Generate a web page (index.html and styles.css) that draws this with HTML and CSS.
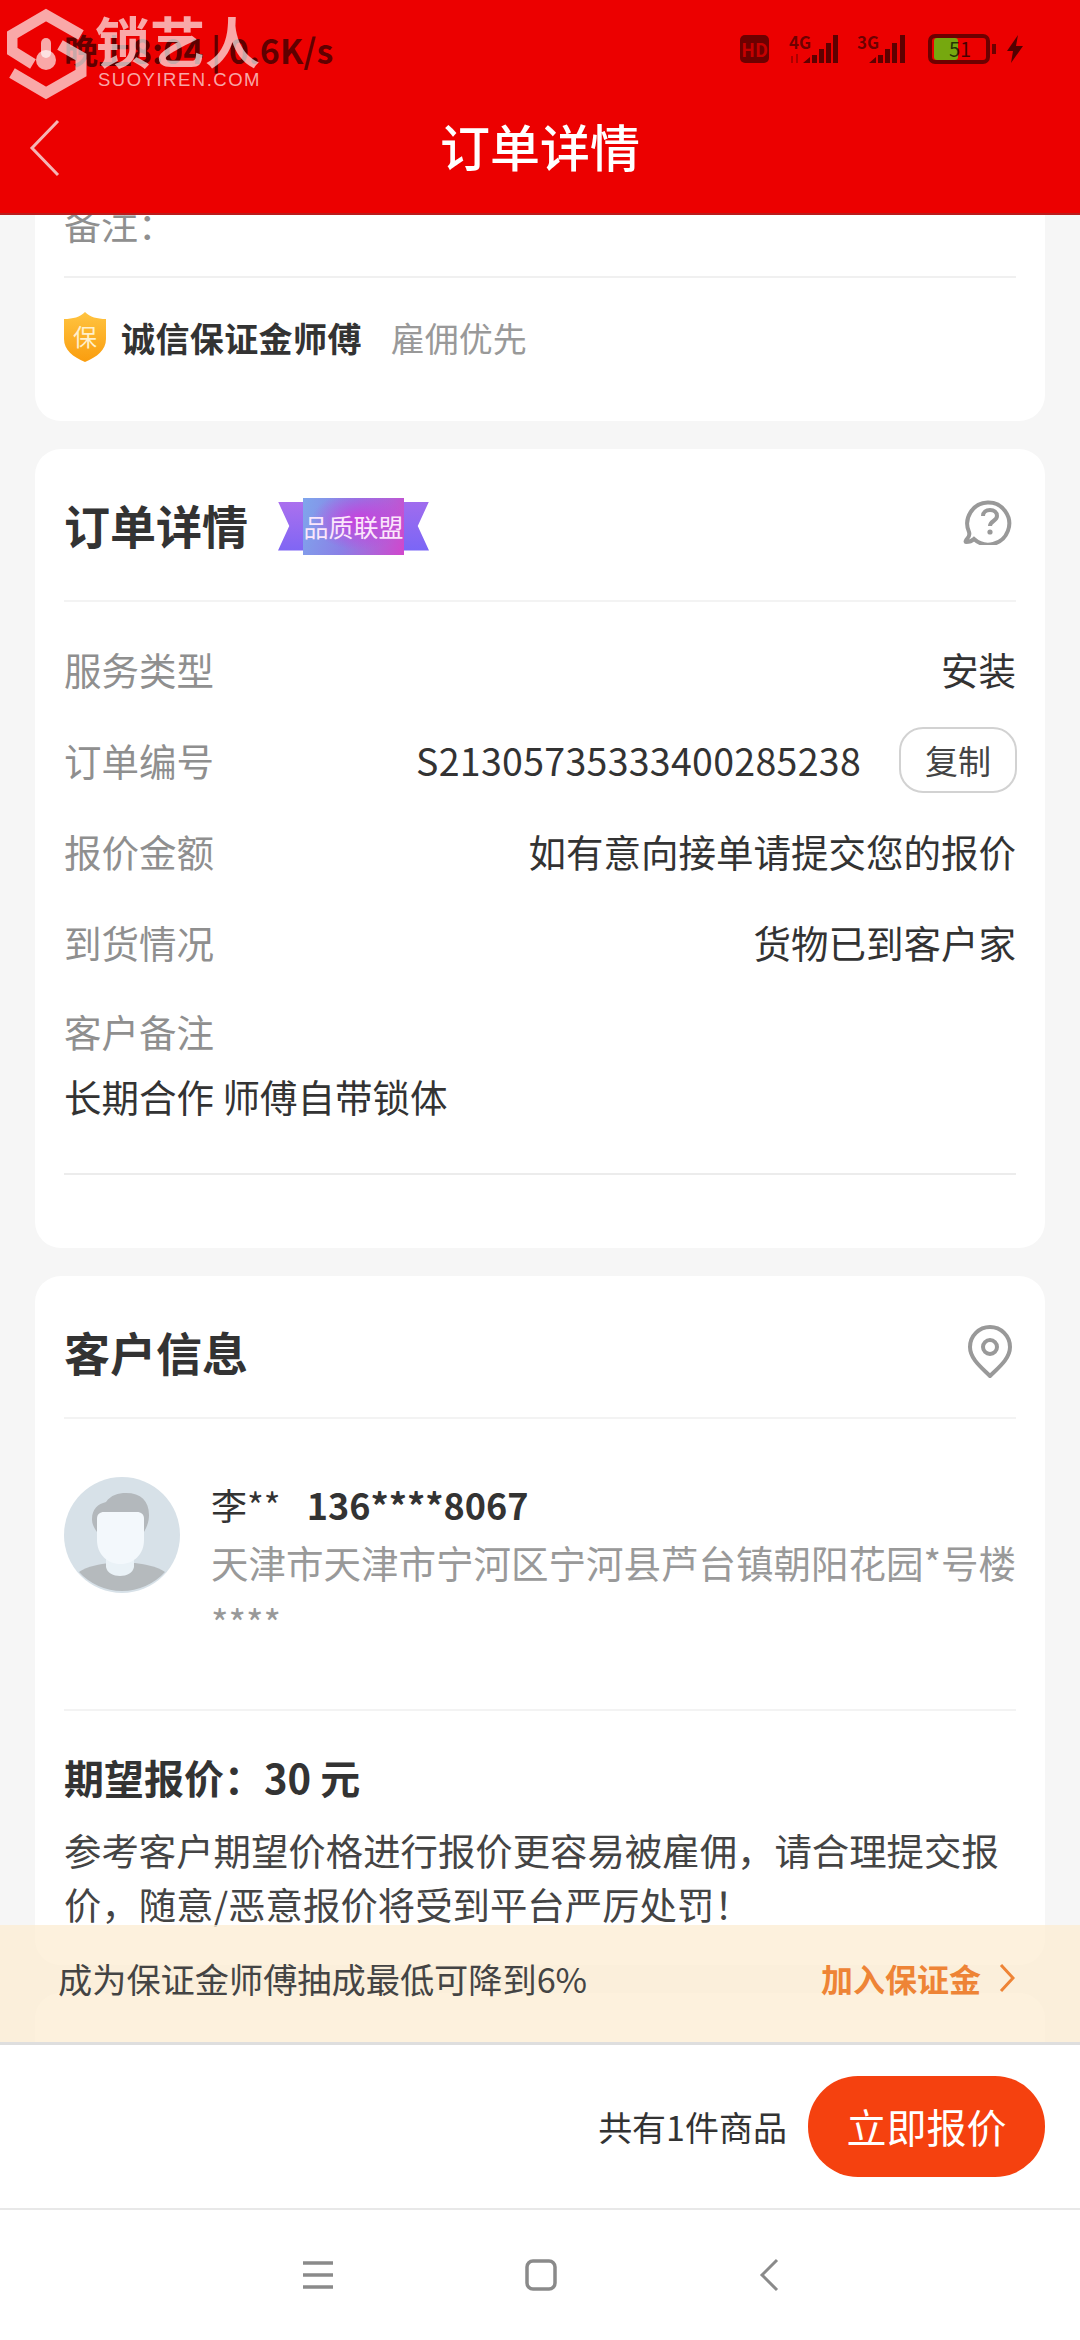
FILE: index.html
```html
<!DOCTYPE html>
<html lang="zh-CN">
<head>
    <meta charset="UTF-8">
    <meta name="viewport" content="width=device-width, initial-scale=1.0">
    <title>订单详情</title>
    <link rel="stylesheet" href="styles.css">
</head>

<body>
    <div class="app">
        <header class="top">
            <div class="status">
                <span class="status-time">晚上8:04 | 0.6K/s</span>
                <div class="status-icons">
                    <span class="hd">HD</span>
                    <div class="signal">
                        <span class="net">4G</span>
                        <svg width="54" height="28" viewBox="0 0 54 28">
                            <path d="M2 21h2v7H2zM7 19h2v9H7z" opacity=".45"/>
                            <path d="M14 28l7-6v6zM23 20h5v8h-5zM30 14h5v14h-5zM37 8h5v20h-5zM44 0h5v28h-5z"/>
                        </svg>
                    </div>
                    <div class="signal">
                        <span class="net">3G</span>
                        <svg width="54" height="28" viewBox="0 0 54 28">
                            <path d="M12 28l7-6v6zM21 20h5v8h-5zM28 14h5v14h-5zM35 8h5v20h-5zM43 0h5v28h-5z"/>
                        </svg>
                    </div>
                    <div class="battery">
                        <div class="battery-fill"></div>
                        <span class="battery-num">51</span>
                    </div>
                    <span class="battery-nub"></span>
                    <svg class="bolt" width="18" height="28" viewBox="0 0 18 28">
                        <path d="M12 0L1 16h6l-2 12 12-17h-7z"/>
                    </svg>
                </div>
            </div>
            <div class="navbar">
                <svg class="nav-back" width="32" height="58" viewBox="0 0 32 58">
                    <path d="M29 2L3 29l26 27"/>
                </svg>
                <h1>订单详情</h1>
            </div>
        </header>

        <!-- site watermark baked into the screenshot -->
        <div class="watermark">
            <svg width="80" height="92" viewBox="0 0 80 92">
                <path class="wm-line" d="M74 27L39 7 5 27v16l21 13"/>
                <path class="wm-line" d="M5 65l34 20 35-20V49L53 37"/>
                <circle class="wm-dot" cx="39" cy="52" r="10"/>
                <rect class="wm-dot" x="34" y="30" width="10" height="20" rx="5"/>
            </svg>
            <div class="wm-text">
                <span class="wm-name">锁艺人</span>
                <span class="wm-url">SUOYIREN.COM</span>
            </div>
        </div>

        <main class="scroll">
            <div class="scroll-body">
                <section class="card">
                    <p class="remark">备注&#xFF1A;</p>
                    <div class="deposit">
                        <div class="shield">
                            <svg width="42" height="50" viewBox="0 0 42 50">
                                <defs>
                                    <linearGradient id="shieldFill" x1="0" y1="0" x2="0" y2="1">
                                        <stop offset="0" stop-color="#ffc441"/>
                                        <stop offset="1" stop-color="#fa9d0e"/>
                                    </linearGradient>
                                </defs>
                                <path d="M21 0c5 5 12 7 21 7v20c0 11-9 18-21 23C9 45 0 38 0 27V7c9 0 16-2 21-7z" fill="url(#shieldFill)"/>
                            </svg>
                            <span class="shield-text">保</span>
                        </div>
                        <strong>诚信保证金师傅</strong>
                        <span class="deposit-sub">雇佣优先</span>
                    </div>
                </section>

                <section class="card">
                    <div class="card-head card-head-tall">
                        <h2>订单详情</h2>
                        <div class="ribbon">
                            <span class="ribbon-end ribbon-left"></span>
                            <span class="ribbon-mid">品质联盟</span>
                            <span class="ribbon-end ribbon-right"></span>
                        </div>
                        <svg class="head-icon head-icon-help" width="50" height="46" viewBox="0 0 50 46">
                            <path class="icon-line" d="M3 43c3 0 6-1 8-3a21 21 0 1 0-5-7c1 3 0 5-2 7-1 1-2 3-1 3z"/>
                            <path class="icon-line" d="M20 17c0-4 3-6 7-6s7 2 7 6c0 5-7 5-7 10"/>
                            <circle cx="27" cy="33" r="2.6" fill="#999"/>
                        </svg>
                    </div>
                    <div class="details">
                        <div class="row">
                            <span class="label">服务类型</span>
                            <span class="value">安装</span>
                        </div>
                        <div class="row">
                            <span class="label">订单编号</span>
                            <span class="value order-no">S21305735333400285238</span>
                            <button class="copy">复制</button>
                        </div>
                        <div class="row">
                            <span class="label">报价金额</span>
                            <span class="value">如有意向接单请提交您的报价</span>
                        </div>
                        <div class="row">
                            <span class="label">到货情况</span>
                            <span class="value">货物已到客户家</span>
                        </div>
                        <div class="row row-note">
                            <span class="label">客户备注</span>
                        </div>
                        <p class="note">长期合作 师傅自带锁体</p>
                    </div>
                </section>

                <section class="card">
                    <div class="card-head">
                        <h2>客户信息</h2>
                        <svg class="head-icon" width="46" height="54" viewBox="0 0 46 54">
                            <path class="icon-line" d="M23 52C15 44 3 35 3 23a20 20 0 0 1 40 0c0 12-12 21-20 29z"/>
                            <circle class="icon-line" cx="23" cy="23" r="7"/>
                        </svg>
                    </div>
                    <div class="customer">
                        <svg class="avatar" width="116" height="116" viewBox="0 0 116 116">
                            <circle cx="58" cy="58" r="58" fill="#d7e1e8"/>
                            <path d="M15 95c8-6 22-8 30-9h26c8 1 22 3 30 9a58 58 0 0 1-86 0z" fill="#b5babd"/>
                            <path d="M42 80h28v10c-2 12-26 12-28 0z" fill="#eaf2f7"/>
                            <path d="M28 42c0-10 6-15 14-17 5-7 12-9 20-9 15 0 23 8 23 22 0 5-1 10-5 17H33c-3-4-5-8-5-13z" fill="#b3b8bc"/>
                            <path d="M33 42c0-5 3-7 7-7h33c4 0 7 2 7 7v21c0 14-10 24-23.500 24S33 77 33 63z" fill="#f3f8fc"/>
                        </svg>
                        <div class="customer-info">
                            <p class="customer-name">李** <b>136****8067</b></p>
                            <p class="customer-addr">天津市天津市宁河区宁河县芦台镇朝阳花园*号楼****</p>
                        </div>
                    </div>
                    <div class="expect">
                        <h3>期望报价&#xFF1A;30 元</h3>
                        <p>参考客户期望价格进行报价更容易被雇佣&#xFF0C;请合理提交报价&#xFF0C;随意/恶意报价将受到平台严厉处罚&#xFF01;</p>
                    </div>
                </section>

                <section class="card card-next"></section>
            </div>

            <div class="notice">
                <span>成为保证金师傅抽成最低可降到6%</span>
                <a class="notice-link">加入保证金
                    <svg width="16" height="30" viewBox="0 0 16 30">
                        <path d="M2 2l12 13L2 28"/>
                    </svg>
                </a>
            </div>
        </main>

        <div class="action">
            <span class="action-count">共有1件商品</span>
            <button class="quote">立即报价</button>
        </div>

        <nav class="sysnav">
            <svg width="32" height="30" viewBox="0 0 32 30">
                <path d="M1 3h30M1 15h30M1 27h30"/>
            </svg>
            <svg width="32" height="32" viewBox="0 0 32 32">
                <rect x="2" y="2" width="28" height="28" rx="6"/>
            </svg>
            <svg class="sysnav-back" width="20" height="34" viewBox="0 0 20 34">
                <path d="M18 2L3 17l15 15"/>
            </svg>
        </nav>
    </div>
</body>

</html>
```

FILE: styles.css
```css
* {
    box-sizing: border-box;
}

body {
    margin: 0;
    font-family: "Noto Sans CJK SC", "Noto Sans", sans-serif;
    background-color: #f6f6f6;
    color: #333;
}

h1, h2, h3, p {
    margin: 0;
}

button {
    font-family: inherit;
    padding: 0;
}

.app {
    position: relative;
    display: flex;
    flex-direction: column;
    width: 1080px;
    height: 2340px;
    overflow: hidden;
}

/* red header */
.top {
    flex: none;
    height: 215px;
    background-color: #ec0000;
    border-bottom: 2px solid #b91d1d;
}

.status {
    display: flex;
    align-items: center;
    justify-content: space-between;
    height: 98px;
    padding: 0 56px 0 64px;
    color: rgba(0, 0, 0, 0.6);
}

.status-time {
    font-size: 34px;
    font-weight: 700;
}

.status-icons {
    display: flex;
    align-items: center;
}

.hd {
    width: 29px;
    height: 28px;
    margin-right: 20px;
    border-radius: 5px;
    background-color: #6d0000;
    color: #c60000;
    font-size: 18px;
    font-weight: 700;
    line-height: 28px;
    text-align: center;
}

.signal {
    position: relative;
    height: 28px;
    margin-right: 14px;
    fill: rgba(0, 0, 0, 0.6);
}

.signal svg {
    display: block;
}

.net {
    position: absolute;
    top: -3px;
    left: 0;
    color: rgba(0, 0, 0, 0.55);
    font-size: 17px;
    font-weight: 700;
    line-height: 20px;
}

.battery {
    position: relative;
    width: 62px;
    height: 30px;
    border: 4px solid #6d0000;
    border-radius: 7px;
    margin-left: 3px;
}

.battery-fill {
    width: 24px;
    height: 100%;
    margin-left: 2px;
    border-radius: 3px;
    background-color: #76a80f;
}

.battery-num {
    position: absolute;
    top: -3px;
    left: 17px;
    color: rgba(0, 0, 0, 0.7);
    font-size: 20px;
    line-height: 28px;
}

.battery-nub {
    width: 4px;
    height: 10px;
    margin: 0 10px 0 2px;
    background-color: #6d0000;
}

.bolt {
    fill: rgba(0, 0, 0, 0.65);
}

.navbar {
    position: relative;
    height: 115px;
    text-align: center;
}

.navbar h1 {
    color: #fff;
    font-size: 50px;
    font-weight: 500;
    line-height: 94px;
}

.nav-back {
    position: absolute;
    top: 21px;
    left: 29px;
    fill: none;
    stroke: #f5b5b5;
    stroke-width: 3;
}

.watermark {
    position: absolute;
    top: 8px;
    left: 7px;
    display: flex;
    color: rgba(255, 255, 255, 0.66);
}

.wm-line {
    fill: none;
    stroke: rgba(255, 255, 255, 0.66);
    stroke-width: 11;
}

.wm-dot {
    fill: rgba(255, 255, 255, 0.66);
}

.wm-text {
    display: flex;
    flex-direction: column;
    margin-left: 8px;
}

.wm-name {
    font-size: 55px;
    font-weight: 700;
    line-height: 62px;
}

.wm-url {
    margin-left: 3px;
    font-family: "Liberation Sans", sans-serif;
    font-size: 18.5px;
    letter-spacing: 1.5px;
    line-height: 20px;
}

/* scrolled content */
.scroll {
    position: relative;
    flex: 1;
    overflow: hidden;
}

.scroll-body {
    margin-top: -43px;
    padding: 0 35px;
}

.card {
    margin-bottom: 28px;
    padding: 0 29px;
    background-color: #fff;
    border-radius: 26px;
    overflow: hidden;
}

.remark {
    padding: 20px 0;
    border-bottom: 2px solid #f0f0f0;
    color: #8f8f8f;
    font-size: 37px;
    line-height: 64px;
}

.deposit {
    display: flex;
    align-items: center;
    height: 143px;
    padding-bottom: 25px;
}

.shield {
    position: relative;
    width: 42px;
    height: 50px;
    margin-right: 15px;
}

.shield svg {
    display: block;
}

.shield-text {
    position: absolute;
    top: 8px;
    left: 9px;
    color: #fff0cc;
    font-size: 24px;
    line-height: 32px;
}

.deposit strong {
    font-size: 34px;
    font-weight: 700;
    letter-spacing: 0.4px;
}

.deposit-sub {
    margin-left: 29px;
    color: #999;
    font-size: 34px;
}

.card-head {
    display: flex;
    align-items: center;
    padding: 44px 0 35px;
    border-bottom: 2px solid #f3f3f3;
}

.card-head-tall {
    padding-bottom: 45px;
}

.card-head h2 {
    font-size: 46px;
    font-weight: 700;
    line-height: 62px;
}

.head-icon {
    margin-left: auto;
    margin-right: 3px;
}

.head-icon-help {
    margin-top: -4px;
}

.icon-line {
    fill: none;
    stroke: #999;
    stroke-width: 4;
}

.ribbon {
    display: flex;
    align-items: center;
    margin-top: 4px;
    margin-left: 30px;
}

.ribbon-mid {
    position: relative;
    width: 101px;
    height: 57px;
    background:
        radial-gradient(ellipse at 55% 40%, #c93fdc 0%, rgba(201, 63, 220, 0) 60%),
        linear-gradient(105deg, #7fa6ec 0%, #8a80e6 45%, #d147cc 100%);
    color: #fbe6fb;
    font-size: 25px;
    line-height: 57px;
    text-align: center;
    white-space: nowrap;
}

.ribbon-end {
    width: 25px;
    height: 49px;
}

.ribbon-left {
    background: linear-gradient(#ab70ee, #7f66f4);
    clip-path: polygon(0 0, 100% 0, 100% 100%, 0 100%, 45% 50%);
}

.ribbon-right {
    background: linear-gradient(#a06cee, #7a66f6);
    clip-path: polygon(0 0, 100% 0, 55% 50%, 100% 100%, 0 100%);
}

.details {
    padding: 21px 0 73px;
}

.row {
    display: flex;
    align-items: center;
    height: 91px;
    font-size: 37.5px;
}

.row-note {
    height: 86px;
}

.label {
    color: #8f8f8f;
}

.value {
    margin-left: auto;
    color: #333;
}

.order-no {
    letter-spacing: 0.3px;
}

.copy {
    width: 118px;
    height: 66px;
    margin-left: 38px;
    margin-right: -1px;
    background-color: #fff;
    border: 2px solid #d2d2d2;
    border-radius: 24px;
    color: #444;
    font-size: 33px;
}

.note {
    padding-bottom: 54px;
    border-bottom: 2px solid #ececec;
    font-size: 37.5px;
    line-height: 46px;
}

.customer {
    display: flex;
    align-items: flex-start;
    gap: 31px;
    padding: 55px 0 57px;
    border-bottom: 2px solid #f3f3f3;
}

.avatar {
    flex: none;
    margin-top: 3px;
}

.customer-info {
    flex: 1;
}

.customer-name {
    font-size: 36px;
    line-height: 60px;
}

.customer-name b {
    margin-left: 18px;
    font-weight: 700;
}

.customer-addr {
    margin-top: -2px;
    color: #999;
    font-size: 37.5px;
    line-height: 60px;
}

.expect {
    padding: 36px 0 34px;
}

.expect h3 {
    font-size: 40px;
    font-weight: 700;
    line-height: 60px;
}

.expect p {
    margin-top: 16px;
    color: #444;
    font-size: 37.4px;
    line-height: 54px;
}

.card-next {
    height: 120px;
}

.notice {
    position: absolute;
    left: 0;
    right: 0;
    bottom: 0;
    display: flex;
    align-items: center;
    justify-content: space-between;
    height: 117px;
    padding: 0 65px 11px 58px;
    background-color: rgba(252, 238, 212, 0.8);
    color: #444;
    font-size: 34.2px;
}

.notice-link {
    display: flex;
    align-items: center;
    gap: 18px;
    color: #ee8436;
    font-size: 32px;
    font-weight: 700;
}

.notice-link svg {
    fill: none;
    stroke: #ee8436;
    stroke-width: 3;
}

/* bottom action bar */
.action {
    flex: none;
    display: flex;
    align-items: center;
    justify-content: flex-end;
    height: 168px;
    padding: 0 35px 1px 0;
    background-color: #fff;
    border-top: 3px solid #dedede;
    border-bottom: 2px solid #e8e8e8;
}

.action-count {
    margin-right: 21px;
    font-size: 34px;
}

.quote {
    width: 237px;
    height: 101px;
    background-color: #f5410f;
    border: none;
    border-radius: 50px;
    color: #fff;
    font-size: 40px;
}

.sysnav {
    flex: none;
    display: flex;
    align-items: center;
    justify-content: center;
    gap: 191px;
    height: 130px;
    background-color: #fff;
}

.sysnav svg {
    fill: none;
    stroke: #8a8a8a;
    stroke-width: 3.5;
}

.sysnav .sysnav-back {
    margin-left: 11px;
    stroke-width: 3;
}
```
